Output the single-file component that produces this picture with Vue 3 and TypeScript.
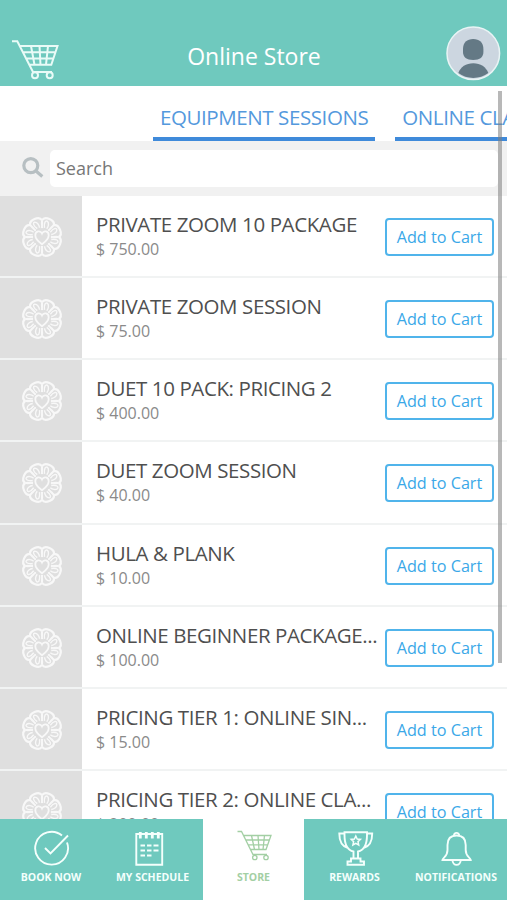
<script setup lang="ts">
interface Product {
  name: string
  price: string
}

const products: Product[] = [
  { name: 'PRIVATE ZOOM 10 PACKAGE', price: '$ 750.00' },
  { name: 'PRIVATE ZOOM SESSION', price: '$ 75.00' },
  { name: 'DUET 10 PACK: PRICING 2', price: '$ 400.00' },
  { name: 'DUET ZOOM SESSION', price: '$ 40.00' },
  { name: 'HULA & PLANK', price: '$ 10.00' },
  { name: 'ONLINE BEGINNER PACKAGE...', price: '$ 100.00' },
  { name: 'PRICING TIER 1: ONLINE SIN...', price: '$ 15.00' },
  { name: 'PRICING TIER 2: ONLINE CLA...', price: '$ 200.00' },
]

const categories: string[] = ['EQUIPMENT SESSIONS', 'ONLINE CLASSES']
const lobes: number[] = Array.from({ length: 8 }, (_, i) => i * 45 + 22.5)
</script>

<template>
  <div class="app">
    <header class="header">
      <svg class="header-cart" viewBox="0 0 48 42">
        <path d="M1 2.300H6.300L22 33H41M9 7H46.500L40.300 25.700H18M12 13.300H44.500M15 19.500H42.500M20 7L23.500 25.700M28.500 7L29.500 25.700M37 7L35 25.700" />
        <circle cx="24" cy="36.300" r="3" />
        <circle cx="38.700" cy="36.300" r="3" />
      </svg>
      <h1 class="title">Online Store</h1>
      <svg class="avatar" viewBox="0 0 56 56">
        <circle cx="28.300" cy="28.300" r="26.300" fill="#ccd6e0" stroke="#e9f4f5" stroke-width="1.500" />
        <path d="M18 24C18 17.500 22 14 28.200 14S38.400 17.500 38.400 24V27C38.400 32 35 35 28.200 35S18 32 18 27Z" fill="#647985" />
        <path d="M13.300 48C15.500 42 21 38.300 28.300 38.300S41 42 43.300 48A25.500 25.500 0 0 1 13.300 48Z" fill="#647985" />
      </svg>
    </header>

    <nav class="tabs">
      <a v-for="category in categories" :key="category" class="tab">{{ category }}</a>
    </nav>

    <div class="search">
      <svg class="search-icon" viewBox="0 0 24 24">
        <circle cx="9.800" cy="9.600" r="7" />
        <path d="M15 15L21.300 20.500" />
      </svg>
      <div class="search-field">Search</div>
    </div>

    <main class="list">
      <article v-for="product in products" :key="product.name" class="row">
        <div class="thumb">
          <svg class="flower" viewBox="-22 -22 44 44">
            <g v-for="angle in lobes" :key="angle" :transform="`rotate(${angle})`">
              <path class="lobe" d="M-6.400 -15.500C-5.500 -20.800 5.500 -20.800 6.400 -15.500" />
              <path class="loop" d="M-6.400 -15.500C-6.500 -13 -5 -11 -3 -8.500M6.400 -15.500C6.500 -13 5 -11 3 -8.500M-1.200 -9.500C-4 -14 -3 -17 -1 -16.500C1.500 -15.500 2 -12 1.200 -9.500" />
            </g>
            <path class="heart" d="M0 7.300C-4 4.300 -6.700 1.500 -6.700 -1.800C-6.700 -6.300 -1.500 -6.800 0 -3.500C1.500 -6.800 6.700 -6.300 6.700 -1.800C6.700 1.500 4 4.300 0 7.300Z" />
          </svg>
        </div>
        <div class="info">
          <div class="name">{{ product.name }}</div>
          <div class="price">{{ product.price }}</div>
        </div>
        <button class="add" type="button">Add to Cart</button>
      </article>
    </main>

    <footer class="bottom">
      <a class="item">
        <svg class="icon" viewBox="0 0 40 40">
          <path d="M31 7.500A16.400 16.400 0 1 0 36 14.500M14 20L19.500 25.500L37 7.500" />
        </svg>
        <span class="label">BOOK NOW</span>
      </a>
      <a class="item">
        <svg class="icon calendar" viewBox="0 0 40 40">
          <path d="M7.300 6H33.200V36.700H7.300Z" />
          <path class="spikes" d="M11.300 4V10.500M17.300 4V10.500M23.300 4V10.500M29.300 4V10.500" />
          <path d="M11.500 17.500H16M18 17.500H22.500M24.500 17.500H29.500M11.500 22.500H16M18 22.500H22.500M24.500 22.500H29.500M11.500 27.500H16M18 27.500H22.500" />
        </svg>
        <span class="label">MY SCHEDULE</span>
      </a>
      <a class="item active">
        <svg class="icon cart" viewBox="0 0 40 40">
          <path d="M3.500 3.500H7.500L19 26.500H33M9.500 7.500H37L32 21.500H16.500M12 12H35.500M14 16.800H34M17.500 7.500L20.500 21.500M24 7.500L25 21.500M30.500 7.500L29 21.500" />
          <circle cx="20.800" cy="29.500" r="2.200" />
          <circle cx="32" cy="29.500" r="2.200" />
        </svg>
        <span class="label">STORE</span>
      </a>
      <a class="item">
        <svg class="icon" viewBox="0 0 40 40">
          <path d="M9.500 4.300H32V7C32 17 29.500 22 23 23.500V30.500H18.500V23.500C12 22 9.500 17 9.500 7ZM9.500 5.500H4.300C4.300 13 7 18.500 13 20M32 5.500H37.200C37.200 13 34.500 18.500 28.500 20M16 30.500H25.500V33.500H29V36.800H12.500V33.500H16Z" />
          <path class="star" d="M20.800 8L22.200 11L25.400 11.400L23 13.600L23.700 17L20.800 15.300L17.900 17L18.600 13.600L16.200 11.400L19.400 11Z" />
        </svg>
        <span class="label">REWARDS</span>
      </a>
      <a class="item">
        <svg class="icon" viewBox="0 0 40 40">
          <path d="M18 7.500A2.600 2.600 0 1 1 23.200 7.500M6.500 32C7 29 11.500 29 11.500 22V17C11.500 10.500 15 7.500 20.600 7.500S29.700 10.500 29.700 17V22C29.700 29 34.200 29 34.700 32ZM16.500 32C16.500 38.500 24.700 38.500 24.700 32" />
        </svg>
        <span class="label">NOTIFICATIONS</span>
      </a>
    </footer>

    <div class="scrollbar"></div>
  </div>
</template>

<style>
body {
  background: #fff;
  overflow: hidden;
}
</style>

<style scoped>
.app {
  position: relative;
  display: flex;
  flex-direction: column;
  width: 507px;
  height: 900px;
  overflow: hidden;
  background: #fff;
  font-family: "Open Sans", "Noto Sans", sans-serif;
}

.header {
  display: grid;
  grid-template-columns: 60px 1fr 60px;
  flex: none;
  box-sizing: border-box;
  height: 86px;
  padding-top: 25px;
  background: #6fc9be;
}

.header-cart {
  width: 48px;
  height: 42px;
  margin: 14px 0 0 11px;
  fill: none;
  stroke: #e9fbf7;
  stroke-width: 2;
}

.title {
  margin: 14px 0 0 1px;
  color: #fff;
  font-size: 23px;
  font-weight: 400;
  line-height: 34px;
  text-align: center;
}

.avatar {
  width: 56px;
  height: 56px;
  margin-left: -2px;
}

.tabs {
  display: flex;
  flex: none;
  gap: 20px;
  height: 55px;
  padding-left: 153px;
  overflow: hidden;
}

.tab {
  flex: none;
  box-sizing: border-box;
  height: 55px;
  padding: 15px 7px 0;
  border-bottom: 4px solid #3f8ada;
  color: #5499dd;
  font-size: 20.500px;
  letter-spacing: -0.410px;
  line-height: 32px;
  white-space: nowrap;
}

.search {
  display: flex;
  flex: none;
  box-sizing: border-box;
  height: 55px;
  padding: 9px 9px 9px 21px;
  background: #f1f1f1;
}

.search-icon {
  width: 24px;
  height: 24px;
  margin: 6px 5px 0 0;
  fill: none;
  stroke: #b7bfc2;
  stroke-width: 3.200;
}

.search-field {
  flex: 1;
  padding-left: 6px;
  border-radius: 5px;
  background: #fff;
  color: #777;
  font-size: 18px;
  line-height: 37px;
}

.list {
  flex: 1;
  min-height: 0;
  overflow: hidden;
}

.row {
  display: flex;
  box-sizing: border-box;
  height: 82.140px;
  border-bottom: 2px solid #f1f3f3;
}

.thumb {
  display: flex;
  flex: none;
  align-items: center;
  justify-content: center;
  width: 82px;
  padding-top: 2px;
  box-sizing: border-box;
  background: #dfdfdf;
}

.flower {
  width: 44px;
  height: 44px;
  margin-left: 1px;
  fill: none;
  stroke: #f8f8f8;
}

.lobe {
  stroke-width: 2.200;
}

.loop {
  stroke-width: 1.400;
}

.heart {
  fill: #dfdfdf;
  stroke-width: 1.800;
}

.info {
  flex: none;
  width: 290px;
  padding: 14px 0 0 14px;
}

.name {
  color: #4f4f4f;
  font-size: 20.500px;
  letter-spacing: -0.400px;
  line-height: 28px;
  white-space: nowrap;
}

.price {
  margin-top: 1px;
  color: #8a8a8a;
  font-size: 16px;
  line-height: 20px;
}

.add {
  flex: none;
  box-sizing: border-box;
  width: 109px;
  height: 38px;
  margin: 22px 0 0 -1px;
  padding: 0;
  border: 2px solid #50b4eb;
  border-radius: 4px;
  background: #fff;
  color: #3aa8e8;
  font-family: inherit;
  font-size: 16.200px;
  line-height: 34px;
  white-space: nowrap;
}

.bottom {
  display: grid;
  grid-template-columns: 102px 101px 101px 101px 102px;
  flex: none;
  height: 81px;
  background: #6fc9be;
}

.item {
  display: flex;
  flex-direction: column;
  align-items: center;
  padding-top: 9px;
  color: #f4fffc;
}

.active {
  background: #fff;
  color: #a3cfa4;
}

.icon {
  width: 40px;
  height: 40px;
  fill: none;
  stroke: currentColor;
  stroke-width: 1.900;
}

.spikes {
  stroke-width: 2.800;
}

.star {
  stroke-width: 1.500;
}

.calendar {
  margin-left: -8px;
}

.cart {
  stroke-width: 1.300;
}

.label {
  margin-top: 1px;
  font-size: 10.500px;
  font-weight: 700;
  line-height: 16px;
  white-space: nowrap;
}

.scrollbar {
  position: absolute;
  top: 91px;
  right: 5px;
  width: 4px;
  height: 572px;
  background: rgba(125, 125, 125, 0.55);
}
</style>
